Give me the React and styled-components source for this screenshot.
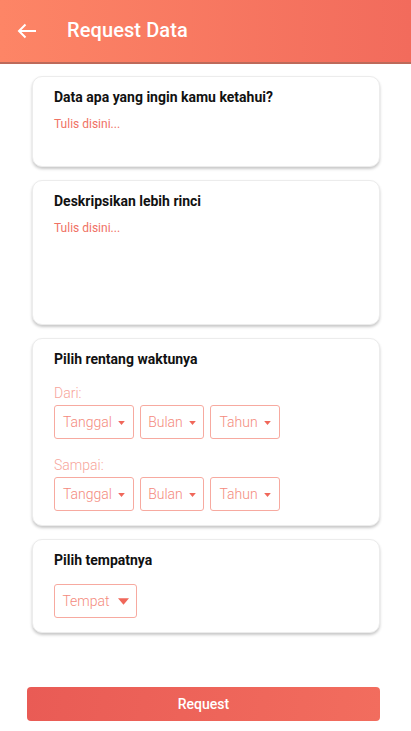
import styled, { createGlobalStyle } from "styled-components";

const GlobalStyle = createGlobalStyle`
  * { box-sizing: border-box; }
  body {
    margin: 0;
    background: #ffffff;
    font-family: Roboto, "Liberation Sans", sans-serif;
  }
`;

const ArrowDown = ({ size = 7 }) => (
  <svg width={size} height={Math.round(size * 0.6)} viewBox="0 0 10 6">
    <path d="M0 0 L10 0 L5 6 Z" fill="#f0675a" />
  </svg>
);

const Select = ({ label, arrow, width, gap }) => (
  <SelectBox $width={width} $gap={gap}>
    <span>{label}</span>
    <ArrowDown size={arrow} />
  </SelectBox>
);

const DateRow = () => (
  <Row>
    <Select label="Tanggal" width={80} />
    <Select label="Bulan" width={64} />
    <Select label="Tahun" width={70} />
  </Row>
);

const App = () => {
  return (
    <Page>
      <GlobalStyle />
      <Header>
        <svg width="20" height="16" viewBox="0 0 20 16">
          <path d="M19 8 H2 M8.5 1.5 L2 8 L8.5 14.5" stroke="#fff" strokeWidth="2" fill="none" />
        </svg>
        <h1>Request Data</h1>
      </Header>

      <Content>
        <Card $height={91}>
          <Title>Data apa yang ingin kamu ketahui?</Title>
          <Placeholder>Tulis disini...</Placeholder>
        </Card>

        <Card $height={145}>
          <Title>Deskripsikan lebih rinci</Title>
          <Placeholder>Tulis disini...</Placeholder>
        </Card>

        <Card $height={188}>
          <Title>Pilih rentang waktunya</Title>
          <Label $top={17}>Dari:</Label>
          <DateRow />
          <Label $top={18}>Sampai:</Label>
          <DateRow />
        </Card>

        <Card $height={94}>
          <Title>Pilih tempatnya</Title>
          <PlaceRow>
            <Select label="Tempat" width={83} arrow={11} gap={8} />
          </PlaceRow>
        </Card>
      </Content>

      <Footer>
        <Button>Request</Button>
      </Footer>
    </Page>
  );
};

export default App;

/* ---------------------------- STYLED COMPONENTS --------------------------- */

const Page = styled.div`
  width: 411px;
  height: 731px;
  display: flex;
  flex-direction: column;
`;

const Header = styled.header`
  height: 64px;
  flex-shrink: 0;
  display: flex;
  align-items: center;
  padding: 0 0 2px 17px;
  background: linear-gradient(90deg, #fd8566 0%, #f26b5c 100%);
  border-bottom: 2px solid #bd6a5a;

  svg {
    margin-top: 1px;
  }

  h1 {
    margin: 0 0 0 30px;
    font-size: 20px;
    font-weight: 500;
    color: #ffffff;
    letter-spacing: 0.1px;
  }
`;

const Content = styled.main`
  display: flex;
  flex-direction: column;
  gap: 13px;
  padding: 12px 31px 0 32px;
`;

const Card = styled.section`
  height: ${(p) => p.$height}px;
  background: #ffffff;
  border-radius: 10px;
  border: 1px solid #ececec;
  box-shadow: 0 2px 3px rgba(0, 0, 0, 0.22);
  padding: 11px 20px 0 21px;
  display: flex;
  flex-direction: column;
`;

const Title = styled.h2`
  margin: 0;
  font-size: 14px;
  font-weight: 700;
  color: #111111;
  line-height: 18px;
`;

const Placeholder = styled.p`
  margin: 10px 0 0;
  font-size: 12px;
  color: #f07264;
  line-height: 16px;
`;

const Label = styled.div`
  margin-top: ${(p) => p.$top}px;
  font-size: 14px;
  color: #f7a59b;
  line-height: 16px;
  font-weight: 300;
`;

const Row = styled.div`
  display: flex;
  gap: 6px;
  margin-top: 4px;
`;

const PlaceRow = styled.div`
  display: flex;
  margin-top: 15px;
`;

const SelectBox = styled.div`
  width: ${(p) => p.$width}px;
  height: 34px;
  border: 1px solid #f7aaa0;
  border-radius: 3px;
  display: flex;
  align-items: center;
  justify-content: center;
  gap: ${(p) => p.$gap ?? 6}px;
  font-size: 14px;
  font-weight: 300;
  color: #f48a7d;

  svg {
    margin-top: 1px;
  }
`;

const Footer = styled.footer`
  margin-top: auto;
  padding: 0 31px 10px 27px;
`;

const Button = styled.button`
  width: 100%;
  height: 34px;
  border: none;
  border-radius: 4px;
  background: linear-gradient(100deg, #e95b55 0%, #f26d5e 100%);
  color: #ffffff;
  font-family: Roboto, "Liberation Sans", sans-serif;
  font-size: 14px;
  font-weight: 500;
`;
